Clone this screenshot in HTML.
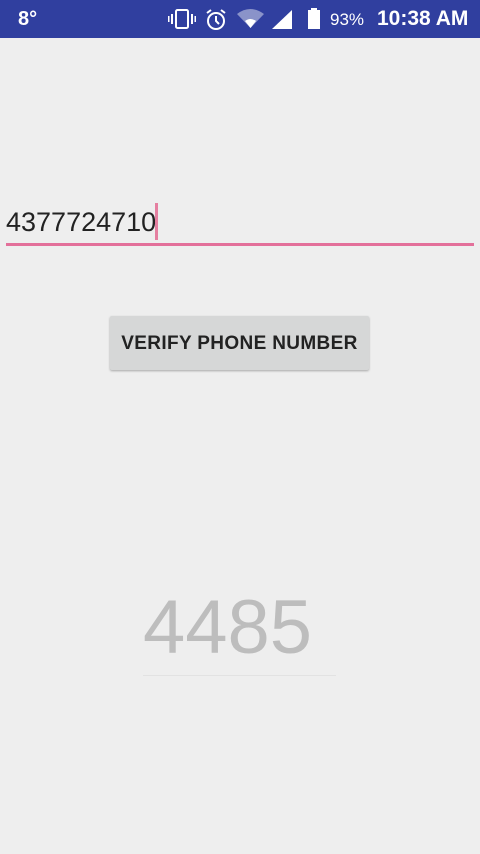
<!DOCTYPE html>
<html><head><style>
body{margin:0;width:480px;height:854px;background:#eeeeee;position:relative;overflow:hidden;font-family:"Liberation Sans",sans-serif}
.sb{position:absolute;left:0;top:0;width:480px;height:38px;background:#303f9f;color:#fff}
.a{position:absolute}
</style></head><body>
<div class="sb">
<div class="a" style="left:18px;top:8px;font-size:20px;font-weight:bold">8°</div>
<svg class="a" style="left:168px;top:8px" width="30" height="22" viewBox="0 0 30 22"><rect x="8" y="2" width="12" height="18" rx="1.5" fill="none" stroke="#fff" stroke-width="2"/><rect x="3" y="6" width="2" height="10" fill="#fff"/><rect x="23" y="6" width="2" height="10" fill="#fff"/><rect x="0" y="8" width="1.5" height="6" fill="#fff"/><rect x="26.5" y="8" width="1.5" height="6" fill="#fff"/></svg>
<svg class="a" style="left:205px;top:8px" width="24" height="24" viewBox="0 0 24 24"><circle cx="11" cy="13" r="8" fill="none" stroke="#fff" stroke-width="2"/><path d="M11 8v5l3 3" stroke="#fff" stroke-width="2" fill="none"/><path d="M2 5l4-3M20 5l-4-3" stroke="#fff" stroke-width="2"/></svg>
<svg class="a" style="left:236px;top:8px" width="30" height="22" viewBox="0 0 30 22"><path d="M1 6Q14-4 28 6L14.5 20Z" fill="#8a93c9"/><path d="M9 13Q14.5 9 20 13L14.5 20Z" fill="#fff"/></svg>
<svg class="a" style="left:270px;top:9px" width="24" height="22" viewBox="0 0 24 22"><path d="M2 20L22 1V20Z" fill="#fff"/></svg>
<svg class="a" style="left:306px;top:8px" width="16" height="22" viewBox="0 0 16 22"><rect x="2" y="2" width="12" height="19" fill="#fff"/><rect x="5" y="0" width="6" height="3" fill="#fff"/></svg>
<div class="a" style="left:330px;top:10px;font-size:17px">93%</div>
<div class="a" style="left:377px;top:7px;font-size:21px;font-weight:bold">10:38 AM</div>
</div>
<div class="a" style="left:6px;top:207px;font-size:27px;color:#222">4377724710</div>
<div class="a" style="left:155px;top:203px;width:3px;height:37px;background:#e57fa0"></div>
<div class="a" style="left:6px;top:243px;width:468px;height:3px;background:#e3709a"></div>
<div class="a" style="left:110px;top:316px;width:259px;height:54px;background:#d6d7d7;border-radius:2px;box-shadow:0 1px 2px rgba(0,0,0,.3);font-size:19px;color:#222;text-align:center;line-height:56px;font-weight:bold;letter-spacing:0.35px">VERIFY PHONE NUMBER</div>
<div class="a" style="left:143px;top:584px;font-size:76px;color:#bdbdbd">4485</div>
<div class="a" style="left:143px;top:675px;width:193px;height:1px;background:#e2e2e2"></div>
</body></html>
